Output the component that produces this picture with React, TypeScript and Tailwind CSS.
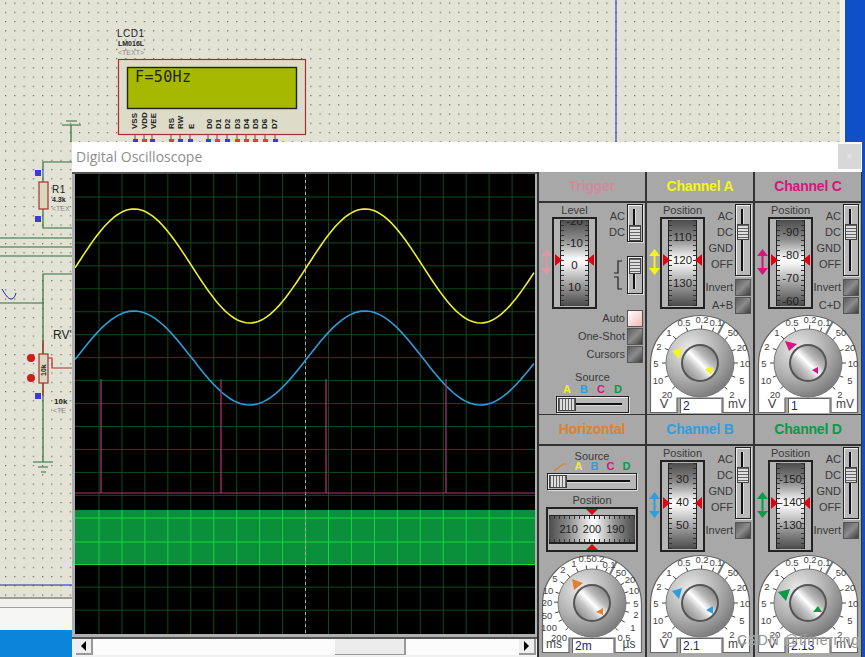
import type { ReactNode } from "react";

const FONT = "font-['Liberation_Sans',Arial,sans-serif]";

type DialLabel = [string, number, number];

// dial labels are measured from the top-left of the 100px wide face
const VOLT_LABELS: DialLabel[] = [
  ["0.5", 34, 8], ["0.2", 52, 5], ["0.1", 66, 8], ["50", 83, 18], ["20", 92, 33], ["10", 95, 49], ["5", 92, 66], ["2", 82, 80],
  ["1", 19, 18], ["2", 9, 32], ["5", 6, 49], ["10", 8, 66], ["20", 17, 80],
];

const TIME_LABELS: DialLabel[] = [
  ["0.5", 43, 4], ["0.2", 56, 4], ["0.1", 67, 10], ["50", 79, 18], ["20", 88, 25], ["10", 92, 36], ["5", 94, 49], ["2", 94, 60], ["1", 91, 73], ["0.5", 82, 83],
  ["1", 32, 9], ["2", 21, 15], ["5", 13, 24], ["10", 6, 36], ["20", 5, 48], ["50", 5, 61], ["100", 7, 73], ["200", 17, 83],
];

function Dial({ id, color, value, left, right, labels, big, small }: {
  id: string;
  color: string;
  value: string;
  left: string;
  right: string;
  labels: DialLabel[];
  big: string;
  small: string;
}) {
  const cx = 51;
  const cy = 49;
  const ticks = labels.map(([t, x, y]) => {
    const dx = x + 1 - cx;
    const dy = y - cy;
    const len = Math.hypot(dx, dy);
    return { key: `${t}${x}`, x1: cx + (dx / len) * 33, y1: cy + (dy / len) * 33, x2: cx + (dx / len) * 38, y2: cy + (dy / len) * 38 };
  });

  return (
    <div className="relative w-[104px] h-[100px]">
      <svg width="104" height="100" viewBox="0 0 104 100" className="block">
        <defs>
          <radialGradient id={`k${id}`} cx="0.35" cy="0.3" r="0.85">
            <stop offset="0" stopColor="#ececec" />
            <stop offset="0.5" stopColor="#b0b0b0" />
            <stop offset="1" stopColor="#686868" />
          </radialGradient>
          <linearGradient id={`c${id}`} x1="0" y1="1" x2="1" y2="0">
            <stop offset="0" stopColor="#707070" />
            <stop offset="0.35" stopColor="#c4c4c4" />
            <stop offset="0.5" stopColor="#ffffff" />
            <stop offset="0.65" stopColor="#bcbcbc" />
            <stop offset="1" stopColor="#6a6a6a" />
          </linearGradient>
        </defs>
        <path d="M1.5 98.5V50a49.5 48.5 0 0 1 99 0V98.5H74V84H28V98.5Z" fill="#fff" stroke="#666" strokeWidth="1.2" />
        <path d="M69 20 L76 7" stroke="#777" strokeWidth="2" />
        {ticks.map((t) => (
          <line key={t.key} x1={t.x1} y1={t.y1} x2={t.x2} y2={t.y2} stroke="#444" strokeWidth="1" />
        ))}
        {labels.map(([t, x, y]) => (
          <text key={`${t}${x}`} x={x + 1} y={y + 3.5} textAnchor="middle" fontSize="9.5" fill="#444" fontFamily="Liberation Sans">{t}</text>
        ))}
        <circle cx={cx} cy={cy} r="34" fill={`url(#k${id})`} stroke="#777" />
        <circle cx={cx} cy={cy} r="19" fill="#555" />
        <circle cx={cx} cy={cy} r="17" fill={`url(#c${id})`} />
        <polygon points={big} transform={`translate(${cx} ${cy})`} fill={color} />
        <polygon points={small} transform={`translate(${cx} ${cy})`} fill={color} />
        <text x={left === "ms" ? 13 : 15} y="94" textAnchor="middle" fontSize={left === "ms" ? 12 : 13} fill="#444" fontFamily="Liberation Sans">{left}</text>
        <text x="88" y="94" textAnchor="middle" fontSize="12" fill="#444" fontFamily="Liberation Sans">{right}</text>
      </svg>
      <div className="absolute left-[31px] top-[84px] w-[41px] h-[15px] bg-white border-t border-l border-[#666] pl-[2px] text-[12px] leading-[14px] text-[#22228a]">{value}</div>
    </div>
  );
}

function Drum({ marks, offset, gap }: { marks: string[]; offset: number; gap: string }) {
  return (
    <div className="relative w-[45px] h-[92px] border-2 border-[#222] bg-[#b4b4b4] px-[6px] py-[1px]">
      <div className="relative h-full overflow-hidden border-x border-[#222] bg-[linear-gradient(180deg,#4c4c4c_0%,#8a8a8a_22%,#ffffff_46%,#f0f0f0_52%,#8c8c8c_80%,#4a4a4a_100%)]">
        <div className="absolute inset-y-0 left-0 w-[3px] bg-[repeating-linear-gradient(180deg,#333_0,#333_1px,transparent_1px,transparent_5px)]" />
        <div className="absolute inset-y-0 right-0 w-[3px] bg-[repeating-linear-gradient(180deg,#333_0,#333_1px,transparent_1px,transparent_5px)]" />
        <div className={`flex flex-col items-center text-[11.5px] leading-[14px] text-[#222] ${gap}`} style={{ marginTop: offset }}>
          {marks.map((m) => <span key={m}>{m}</span>)}
        </div>
      </div>
      <div className="absolute left-[1px] top-[35px] w-0 h-0 border-y-[6px] border-y-transparent border-l-[7px] border-l-[#e00010]" />
      <div className="absolute right-[1px] top-[35px] w-0 h-0 border-y-[6px] border-y-transparent border-r-[7px] border-r-[#e00010]" />
    </div>
  );
}

function UpDownArrow({ color }: { color: string }) {
  return (
    <svg width="11" height="26" viewBox="0 0 11 26" className="block shrink-0">
      <polygon points="5.5,0 11,7 0,7" fill={color} />
      <polygon points="5.5,26 11,19 0,19" fill={color} />
      <rect x="4.5" y="6" width="2" height="14" fill={color} />
    </svg>
  );
}

function VSlider({ height, thumbTop }: { height: string; thumbTop: string }) {
  return (
    <div className={`relative w-[16px] ${height} border border-[#222] bg-[#b8b8b8] shadow-[inset_1px_1px_0_#eee,1px_1px_0_#ddd]`}>
      <div className="absolute left-[5px] top-[4px] bottom-[4px] w-[3px] bg-[#111] border-r border-[#ddd]" />
      <div className={`absolute left-[1px] right-[1px] h-[16px] border border-[#444] bg-[repeating-linear-gradient(180deg,#666_0,#666_1px,#ddd_1px,#ddd_3px)] ${thumbTop}`} />
    </div>
  );
}

function HSlider({ width }: { width: string }) {
  return (
    <div className={`relative ${width} h-[17px] border border-[#222] bg-[#b8b8b8] shadow-[inset_1px_1px_0_#eee,1px_1px_0_#ddd]`}>
      <div className="absolute left-[4px] right-[6px] top-[6px] h-[3px] bg-[#111] border-b border-[#ddd]" />
      <div className="absolute left-[1px] top-[1px] w-[18px] h-[13px] border border-[#444] bg-[repeating-linear-gradient(90deg,#666_0,#666_1px,#ddd_1px,#ddd_3px)]" />
    </div>
  );
}

function SquareButton({ lit }: { lit?: boolean }) {
  return (
    <div className={`w-[16px] h-[17px] border border-[#555] shrink-0 ${lit ? "bg-[linear-gradient(135deg,#fff,#f6b8b8)]" : "bg-[linear-gradient(135deg,#5c5c5c,#8c8c8c_50%,#3c3c3c)]"}`} />
  );
}

function ButtonRow({ label, lit }: { label: string; lit?: boolean }) {
  return (
    <div className="flex items-center justify-end gap-[2px] h-[18px]">
      <span className="text-[11px] leading-none text-[#3a3a3a]">{label}</span>
      <SquareButton lit={lit} />
    </div>
  );
}

function Header({ title, color }: { title: string; color: string }) {
  return (
    <div className="h-[31px] shrink-0 flex items-center justify-center border-b-2 border-[#333] text-[14px] font-bold tracking-[-0.2px]" style={{ color }}>
      {title}
    </div>
  );
}

function Label({ children, className }: { children: ReactNode; className?: string }) {
  return <span className={`block text-[11px] leading-[12px] text-[#3a3a3a] ${className ?? ""}`}>{children}</span>;
}

function Channel({ id, title, color, marks, offset, value, big, small, sum, last }: {
  id: string;
  title: string;
  color: string;
  marks: string[];
  offset: number;
  value: string;
  big: string;
  small: string;
  sum?: string;
  last?: boolean;
}) {
  return (
    <section className={`flex flex-col bg-[#a8a8a8] ${last ? "mt-[1px]" : ""}`}>
      <Header title={title} color={color} />
      <div className="flex-1 flex flex-col">
        <div className="flex pl-[2px] pr-[2px] pt-[1px]">
          <div className="w-[10px] pt-[45px]"><UpDownArrow color={color} /></div>
          <div className="ml-[1px] flex flex-col items-center">
            <span className="text-[11px] leading-[13px] text-[#3a3a3a]">Position</span>
            <Drum marks={marks} offset={offset} gap="gap-[9px]" />
          </div>
          <div className="flex-1 flex flex-col items-end">
            <div className="flex gap-[2px]">
              <div className="flex flex-col items-end text-[11px] leading-[16px] text-[#3a3a3a] pt-[4px]">
                <span>AC</span><span>DC</span><span>GND</span><span>OFF</span>
              </div>
              <VSlider height="h-[72px]" thumbTop="top-[19px]" />
            </div>
            <div className="mt-[2px]">
              <ButtonRow label="Invert" />
              {sum && <ButtonRow label={sum} />}
            </div>
          </div>
        </div>
        <div className={`mt-auto ml-[2px] ${last ? "mb-[3px]" : "mb-[2px]"}`}>
          <Dial id={id} color={color} value={value} left="V" right="mV" labels={VOLT_LABELS} big={big} small={small} />
        </div>
      </div>
    </section>
  );
}

function Scope() {
  const w = 460;
  const h = 460;
  const xs = Array.from({ length: 19 }, (_, i) => 24 + i * 22.95);
  const ys = Array.from({ length: 19 }, (_, i) => 23 + i * 22.95);
  const wave = (center: number, amp: number) => {
    let d = "";
    for (let x = 0; x <= w; x += 3) {
      const y = center - amp * Math.cos(((x - 59) / 231) * Math.PI * 2);
      d += `${x === 0 ? "M" : "L"}${x} ${y.toFixed(1)} `;
    }
    return d;
  };

  return (
    <svg width={w} height={h} viewBox={`0 0 ${w} ${h}`} className="block">
      <rect width={w} height={h} fill="#000" />
      {xs.map((x) => <line key={x} x1={x} y1="0" x2={x} y2={h} stroke="#0e4a1c" strokeWidth="1" />)}
      {ys.map((y) => <line key={y} x1="0" y1={y} x2={w} y2={y} stroke="#0e4a1c" strokeWidth="1" />)}
      <rect x="0" y="336" width={w} height="55" fill="#0a8f3a" />
      {xs.map((x) => <line key={`b${x}`} x1={x} y1="336" x2={x} y2="391" stroke="#14d83e" strokeWidth="1" />)}
      {[344, 368, 390.5].map((y) => <line key={y} x1="0" y1={y} x2={w} y2={y} stroke="#14d83e" strokeWidth="1" />)}
      <line x1="230.5" y1="0" x2="230.5" y2={h} stroke="#a8a8a8" strokeWidth="1" strokeDasharray="3 3" />
      <path d={wave(92, 57)} fill="none" stroke="#f2ee30" strokeWidth="1.6" />
      <path d={wave(184, 47)} fill="none" stroke="#2a9fd8" strokeWidth="1.6" />
      <path d="M0 319H26V205V319H146V205V319H251V205V319H371V205V319H460" fill="none" stroke="#b8307a" strokeWidth="1.2" />
    </svg>
  );
}

function ScrollBar() {
  return (
    <div className="h-[20px] flex items-stretch pl-[4px] pr-[1px] pb-[2px] bg-[#f0f0f0] border-t-2 border-[#555]">
      <div className="w-[17px] flex items-center justify-center border-r-2 border-b-2 border-[#999] bg-[#efefef]">
        <div className="w-0 h-0 border-y-[5px] border-y-transparent border-r-[5px] border-r-black" />
      </div>
      <div className="w-[242px] bg-[#fcfcfc]" />
      <div className="w-[71px] bg-[#ececec] border-r-2 border-b border-[#999]" />
      <div className="flex-1 bg-[#fcfcfc]" />
      <div className="w-[17px] flex items-center justify-center border-r-2 border-b-2 border-[#999] bg-[#efefef]">
        <div className="w-0 h-0 border-y-[5px] border-y-transparent border-l-[5px] border-l-black" />
      </div>
    </div>
  );
}

function TriggerPanel() {
  return (
    <section className="flex flex-col bg-[#a8a8a8]">
      <Header title="Trigger" color="#cf8c9c" />
      <div className="flex-1 flex flex-col pt-[1px]">
        <div className="flex pl-[2px] pr-[2px]">
          <div className="w-[10px] pt-[45px]"><UpDownArrow color="#d99aa8" /></div>
          <div className="flex flex-col items-center ml-[1px]">
            <span className="text-[11px] leading-[13px] text-[#3a3a3a]">Level</span>
            <Drum marks={["-20", "-10", "0", "10"]} offset={-6} gap="gap-[8px]" />
          </div>
          <div className="flex-1 flex flex-col items-end gap-[14px]">
            <div className="flex gap-[2px]">
              <div className="flex flex-col items-end text-[11px] leading-[16px] text-[#3a3a3a] pt-[4px]"><span>AC</span><span>DC</span></div>
              <VSlider height="h-[38px]" thumbTop="top-[20px]" />
            </div>
            <div className="flex items-center gap-[4px]">
              <svg width="9" height="32" viewBox="0 0 9 32" className="block">
                <path d="M0 14H4V2H8M0 18H4V30H8" fill="none" stroke="#222" strokeWidth="1.2" />
              </svg>
              <VSlider height="h-[38px]" thumbTop="top-[1px]" />
            </div>
          </div>
        </div>
        <div className="flex flex-col pr-[2px]">
          <ButtonRow label="Auto" lit />
          <ButtonRow label="One-Shot" />
          <ButtonRow label="Cursors" />
        </div>
        <div className="flex flex-col items-center mt-[8px] pl-[1px]">
          <Label>Source</Label>
          <div className="flex gap-[9px] text-[11px] leading-[13px] font-bold">
            <span className="text-[#f2ee30]">A</span><span className="text-[#2a9fe0]">B</span><span className="text-[#d6157f]">C</span><span className="text-[#0a9a4a]">D</span>
          </div>
          <HSlider width="w-[73px]" />
        </div>
      </div>
    </section>
  );
}

function HorizontalPanel() {
  return (
    <section className="flex flex-col bg-[#a8a8a8] mt-[1px]">
      <Header title="Horizontal" color="#e08030" />
      <div className="flex-1 flex flex-col pt-[4px]">
        <div className="flex flex-col items-center">
          <Label>Source</Label>
          <div className="flex items-center gap-[8px] text-[11px] leading-[11px] font-bold -mt-[1px]">
            <svg width="13" height="10" viewBox="0 0 13 10" className="block"><path d="M0 9L9 2H13" fill="none" stroke="#e08030" strokeWidth="1.2" /></svg>
            <span className="text-[#f2ee30]">A</span><span className="text-[#2a9fe0]">B</span><span className="text-[#d6157f]">C</span><span className="text-[#0a9a4a]">D</span>
          </div>
          <div className="mt-[1px]"><HSlider width="w-[90px]" /></div>
          <Label className="mt-[4px] mb-[1px]">Position</Label>
          <div className="relative w-[92px] h-[45px] border-2 border-[#222] bg-[#b4b4b4] px-[1px] py-[6px]">
            <div className="relative h-full border-b-2 border-t border-[#222] flex items-center justify-center gap-[5px] text-[11px] text-[#222] bg-[linear-gradient(90deg,#4c4c4c_0%,#8a8a8a_22%,#ffffff_52%,#8c8c8c_78%,#4a4a4a_100%)]">
              <div className="absolute inset-x-0 top-0 h-[3px] bg-[repeating-linear-gradient(90deg,#333_0,#333_1px,transparent_1px,transparent_5px)]" />
              <div className="absolute inset-x-0 bottom-0 h-[3px] bg-[repeating-linear-gradient(90deg,#333_0,#333_1px,transparent_1px,transparent_5px)]" />
              <span>210</span><span>200</span><span>190</span>
            </div>
            <div className="absolute left-[38px] top-0 w-0 h-0 border-x-[6px] border-x-transparent border-t-[6px] border-t-[#e00010]" />
            <div className="absolute left-[38px] bottom-0 w-0 h-0 border-x-[6px] border-x-transparent border-b-[6px] border-b-[#e00010]" />
          </div>
        </div>
        <div className="mt-auto ml-[2px] mb-[3px]">
          <Dial id="h" color="#e08030" value="2m" left="ms" right="µs" labels={TIME_LABELS} big="-20,-24 -9,-20 -18,-13" small="4,9 11,5 11,12" />
        </div>
      </div>
    </section>
  );
}

// dot grid and parts of the design sheet behind the floating window
function Schematic() {
  const pinLabels: [string, number][] = [
    ["VSS", 135], ["VDD", 145], ["VEE", 154], ["RS", 172], ["RW", 181], ["E", 192], ["D0", 210], ["D1", 219], ["D2", 228], ["D3", 238], ["D4", 247], ["D5", 256], ["D6", 265], ["D7", 275],
  ];
  const pins: [number, string][] = [
    [133, "#3a3ae0"], [142, "#e03a3a"], [150, "#3a3ae0"], [169, "#e03a3a"], [178, "#3a3ae0"], [188, "#3a3ae0"], [206, "#3a3ae0"], [215, "#e03a3a"], [225, "#3a3ae0"], [235, "#e03a3a"], [244, "#e03a3a"], [253, "#e03a3a"], [263, "#e03a3a"], [273, "#3a3ae0"],
  ];
  const wire = "#2f6e3e";
  const part = "#a83030";

  return (
    <svg width="865" height="657" viewBox="0 0 865 657" className="absolute inset-0 block" fontFamily="Liberation Sans">
      <defs>
        <pattern id="dots" x="5" y="2.5" width="9.25" height="9.25" patternUnits="userSpaceOnUse">
          <rect width="1.2" height="1.2" fill="#66665a" />
        </pattern>
      </defs>
      <rect width="865" height="657" fill="#e3e3d5" />
      <rect width="865" height="597" fill="url(#dots)" />
      <line x1="616" y1="0" x2="616" y2="142" stroke="#1a1ad0" />
      <rect x="840" y="0" width="5" height="142" fill="#f1f1ea" />
      <rect x="845" y="0" width="20" height="657" fill="#0f4fc8" />

      <text x="117" y="37" fontSize="10" letterSpacing="0.5" fill="#222">LCD1</text>
      <text x="118" y="46" fontSize="7" fontWeight="bold" fill="#222">LM016L</text>
      <text x="118" y="55" fontSize="7" fill="#888">&lt;TEXT&gt;</text>
      <rect x="118.5" y="59.5" width="187" height="75" fill="#dcdcc8" stroke={part} strokeWidth="1.2" />
      <rect x="127.5" y="67.5" width="169" height="41" fill="#a6b800" stroke="#222" strokeWidth="1.4" />
      <text x="135" y="82" fontSize="15" fontFamily="DejaVu Sans Mono" fill="#222" textLength="56">F=50Hz</text>
      {pinLabels.map(([t, x]) => (
        <text key={t} x={x} y="129" fontSize="8" fontWeight="bold" fill="#222" transform={`rotate(-90 ${x} 129)`} dominantBaseline="middle">{t}</text>
      ))}
      {pins.map(([x, c]) => (
        <g key={x}>
          <line x1={x + 2} y1="135" x2={x + 2} y2="143" stroke={part} />
          <rect x={x} y="139" width="5" height="4" fill={c} />
        </g>
      ))}

      <g stroke={wire} strokeWidth="1.2" fill="none">
        <path d="M62 125H81M66 121H77M71 125V142" />
        <path d="M72 162H43V182M43 209V228H72" />
        <path d="M0 238H72M0 247H72M0 256H72" />
        <path d="M72 274H43V462M0 303H44" />
        <path d="M33 462H53M38 467H48M41 472H46" />
      </g>
      <rect x="39" y="182" width="9" height="27" fill="#d8d8c0" stroke={part} strokeWidth="1.2" />
      <rect x="35" y="170" width="6" height="6" fill="#3a3ae0" />
      <rect x="35" y="216" width="6" height="6" fill="#3a3ae0" />
      <text x="52" y="193" fontSize="10" letterSpacing="0.5" fill="#222">R1</text>
      <text x="52" y="202" fontSize="7" fontWeight="bold" fill="#222">4.3k</text>
      <text x="52" y="211" fontSize="7" fill="#888">&lt;TEX</text>

      <path d="M2 289C5 294 8 299 11 299C14 299 15 296 16 293" fill="none" stroke="#1a1ab0" />
      <line x1="43" y1="340" x2="43" y2="396" stroke={part} strokeWidth="1.2" />
      <rect x="39" y="354" width="9" height="29" fill="#d8d8c0" stroke={part} strokeWidth="1.2" />
      <text x="46" y="376" fontSize="7" fontWeight="bold" fill="#222" transform="rotate(-90 46 376)">10k</text>
      <circle cx="31" cy="358" r="4" fill="#c81e1e" />
      <circle cx="31" cy="378" r="4" fill="#c81e1e" />
      <path d="M48 358H52V368H72" fill="none" stroke={part} strokeWidth="1.2" />
      <rect x="35" y="393" width="6" height="6" fill="#3a3ae0" />
      <text x="53" y="339" fontSize="12" fill="#222">RV'</text>
      <text x="54" y="404" fontSize="8" fontWeight="bold" fill="#222">10k</text>
      <text x="53" y="413" fontSize="7" fill="#888">&lt;TE</text>

      <line x1="0" y1="585" x2="72" y2="585" stroke="#2020c0" />
      <rect x="0" y="597" width="72" height="2" fill="#9c9c94" />
      <rect x="0" y="599" width="72" height="8" fill="#f0f0ee" />
      <rect x="0" y="607" width="72" height="1" fill="#a0a0a0" />
      <rect x="0" y="608" width="72" height="22" fill="#f6f6f4" />
      <rect x="0" y="630" width="72" height="27" fill="#0a85da" />
    </svg>
  );
}

export default function App() {
  return (
    <div className={`relative w-[865px] h-[657px] overflow-hidden ${FONT}`}>
      <Schematic />
      {/* floating oscilloscope window */}
      <div className="absolute left-[72px] top-[142px] w-[790px] h-[515px] flex flex-col bg-white">
        <div className="h-[30px] shrink-0 flex items-center justify-between pl-[4px] pr-[1px] pt-[1px] pb-[3px]">
          <span className="font-['Open_Sans',sans-serif] text-[14px] text-[#8e8e8e]">Digital Oscilloscope</span>
          <div className="w-[23px] h-[25px] bg-[#d8d8d8] flex items-center justify-center text-[10px] text-[#e8e8e8]">×</div>
        </div>
        <div className="flex-1 flex min-h-0">
          <div className="w-[465px] shrink-0 flex flex-col bg-[#8a8a8a]">
            <div className="flex-1 pl-[3px] pt-[2px] pr-[2px] bg-[linear-gradient(180deg,#555_0,#555_2px,#b0b0b0_2px)]"><Scope /></div>
            <ScrollBar />
          </div>
          <div className="flex-1 grid grid-cols-[106px_106px_106px] grid-rows-[242px_243px] gap-x-[2px] bg-[#333] border-l-2 border-[#333]">
            <TriggerPanel />
            <Channel id="a" title="Channel A" color="#f5f51a" marks={["110", "120", "130"]} offset={10} value="2" big="-28,-12 -18,-15 -21,-4" small="5,6 13,4 11,12" sum="A+B" />
            <Channel id="c" title="Channel C" color="#d6157f" marks={["-90", "-80", "-70", "-60"]} offset={5} value="1" big="-23,-22 -11,-19 -19,-12" small="4,7 10,4 10,11" sum="C+D" />
            <HorizontalPanel />
            <Channel id="b" title="Channel B" color="#2a9fe0" marks={["30", "40", "50"]} offset={9} value="2.1" big="-28,-12 -18,-15 -21,-4" small="6,7 13,3 13,11" last />
            <Channel id="d" title="Channel D" color="#0a9a4a" marks={["-150", "-140", "-130"]} offset={9} value="2.13" big="-30,-11 -18,-14 -22,-2" small="5,9 10,3 14,9" last />
          </div>
        </div>
      </div>
      <div className="absolute left-[737px] top-[630px] text-[14px] tracking-[0.7px] text-[#8a8a8a]/90 [text-shadow:0_0_1px_#e8e8e8] pointer-events-none">CSDN @timerring</div>
    </div>
  );
}
